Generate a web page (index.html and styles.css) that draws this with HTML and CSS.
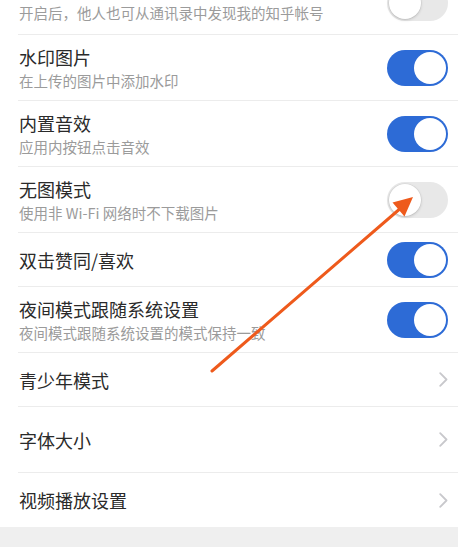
FILE: index.html
```html
<!DOCTYPE html>
<html lang="zh-CN">
<head>
<meta charset="utf-8">
<title>设置</title>
<link rel="stylesheet" href="styles.css">
</head>
<body>
<div class="page">
  <div class="list">
    <div class="row first">
      <div class="text">
        <div class="sub">开启后，他人也可从通讯录中发现我的知乎帐号</div>
      </div>
      <span class="switch"><span class="knob"></span></span>
    </div>
    <div class="row two">
      <div class="text">
        <div class="title">水印图片</div>
        <div class="sub">在上传的图片中添加水印</div>
      </div>
      <span class="switch on"><span class="knob"></span></span>
    </div>
    <div class="row two">
      <div class="text">
        <div class="title">内置音效</div>
        <div class="sub">应用内按钮点击音效</div>
      </div>
      <span class="switch on"><span class="knob"></span></span>
    </div>
    <div class="row two">
      <div class="text">
        <div class="title">无图模式</div>
        <div class="sub">使用非 Wi-Fi 网络时不下载图片</div>
      </div>
      <span class="switch"><span class="knob"></span></span>
    </div>
    <div class="row one">
      <div class="text">
        <div class="title">双击赞同/喜欢</div>
      </div>
      <span class="switch on"><span class="knob"></span></span>
    </div>
    <div class="row two">
      <div class="text">
        <div class="title">夜间模式跟随系统设置</div>
        <div class="sub">夜间模式跟随系统设置的模式保持一致</div>
      </div>
      <span class="switch on"><span class="knob"></span></span>
    </div>
    <div class="row one">
      <div class="text">
        <div class="title">青少年模式</div>
      </div>
      <svg class="chev" width="9" height="15" viewBox="0 0 9 15"><path d="M1.2 1.2 L7.5 7.5 L1.2 13.8" fill="none" stroke="#c8c8cc" stroke-width="1.8" stroke-linecap="round" stroke-linejoin="round"/></svg>
    </div>
    <div class="row two">
      <div class="text">
        <div class="title">字体大小</div>
      </div>
      <svg class="chev" width="9" height="15" viewBox="0 0 9 15"><path d="M1.2 1.2 L7.5 7.5 L1.2 13.8" fill="none" stroke="#c8c8cc" stroke-width="1.8" stroke-linecap="round" stroke-linejoin="round"/></svg>
    </div>
    <div class="row one last">
      <div class="text">
        <div class="title">视频播放设置</div>
      </div>
      <svg class="chev" width="9" height="15" viewBox="0 0 9 15"><path d="M1.2 1.2 L7.5 7.5 L1.2 13.8" fill="none" stroke="#c8c8cc" stroke-width="1.8" stroke-linecap="round" stroke-linejoin="round"/></svg>
    </div>
  </div>
  <div class="footer"></div>
  <svg class="annot" width="458" height="547" viewBox="0 0 458 547">
    <line x1="212" y1="371" x2="402" y2="207" stroke="#ee5a1c" stroke-width="3" stroke-linecap="round"/>
    <polygon points="413,197 404.5,216.5 392.5,202.5" fill="#ee5a1c"/>
  </svg>
</div>
</body>
</html>
```

FILE: styles.css
```css
html, body {
  margin: 0;
  padding: 0;
  background: #ffffff;
}

.page {
  position: relative;
  width: 458px;
  height: 547px;
  overflow: hidden;
  font-family: "Noto Sans CJK SC", "Noto Sans", sans-serif;
}

.list {
  display: flex;
  flex-direction: column;
}

.row {
  box-sizing: border-box;
  display: flex;
  align-items: center;
  justify-content: space-between;
  margin-left: 18px;
  padding-left: 1px;
  padding-right: 10px;
  border-bottom: 1px solid #ececec;
}

.row.two {
  height: 66px;
}

.row.one {
  height: 54px;
}

.row.first {
  height: 35px;
  align-items: flex-end;
  padding-bottom: 11px;
}

.row.first .switch {
  margin-bottom: 2px;
}

.row.last {
  border-bottom: none;
}

.text {
  display: flex;
  flex-direction: column;
}

.title {
  font-size: 18px;
  line-height: 26px;
  color: #2a2a2a;
}

.sub {
  font-size: 14.5px;
  line-height: 21px;
  color: #9b9b9b;
}

.switch {
  box-sizing: border-box;
  width: 61px;
  height: 36px;
  border-radius: 18px;
  background: #e8e8e8;
  display: flex;
  align-items: center;
  padding: 2px;
  flex-shrink: 0;
}

.switch .knob {
  width: 32px;
  height: 32px;
  border-radius: 50%;
  background: #ffffff;
  box-shadow: 0 1px 3px rgba(0, 0, 0, 0.18), 0 0 0 0.5px rgba(0, 0, 0, 0.06);
}

.switch.on {
  background: #2d6bd6;
  justify-content: flex-end;
}

.switch.on .knob {
  box-shadow: none;
}

.chev {
  display: block;
}

.footer {
  height: 21px;
  background: #efefef;
}

.annot {
  position: absolute;
  left: 0;
  top: 0;
  pointer-events: none;
}
```
